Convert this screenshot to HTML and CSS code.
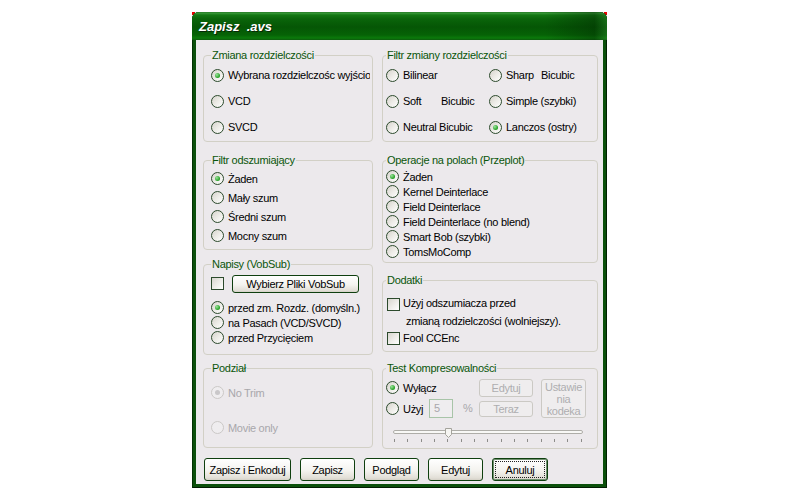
FILE: index.html
```html
<!DOCTYPE html>
<html lang="pl">
<head>
  <meta charset="UTF-8">
  <title>Zapisz .avs</title>
  <link rel="stylesheet" href="styles.css">
</head>
<body>
  <div class="frame">
    <div class="window">
      <div class="titlebar"><span class="title">Zapisz&nbsp; .avs</span></div>

      <div class="client">
        <div class="columns">
          <!-- LEFT COLUMN -->
          <div class="col">
            <fieldset class="group left h93">
              <legend>Zmiana rozdzielczości</legend>
              <div class="rows-26">
                <div class="opt"><span class="radio on"></span><span class="txt">Wybrana rozdzielczośc wyjściowa</span></div>
                <div class="opt"><span class="radio"></span><span class="txt">VCD</span></div>
                <div class="opt"><span class="radio"></span><span class="txt">SVCD</span></div>
              </div>
            </fieldset>

            <fieldset class="group left h96 mt12">
              <legend>Filtr odszumiający</legend>
              <div class="rows-19 pt2">
                <div class="opt"><span class="radio on"></span><span class="txt">Żaden</span></div>
                <div class="opt"><span class="radio"></span><span class="txt">Mały szum</span></div>
                <div class="opt"><span class="radio"></span><span class="txt">Średni szum</span></div>
                <div class="opt"><span class="radio"></span><span class="txt">Mocny szum</span></div>
              </div>
            </fieldset>

            <fieldset class="group left h97 mt8">
              <legend>Napisy (VobSub)</legend>
              <div class="vob">
                <span class="check"></span>
                <button class="btn vob-btn">Wybierz Pliki VobSub</button>
              </div>
              <div class="rows-15 pt7">
                <div class="opt"><span class="radio on"></span><span class="txt">przed zm. Rozdz. (domyśln.)</span></div>
                <div class="opt"><span class="radio"></span><span class="txt">na Pasach (VCD/SVCD)</span></div>
                <div class="opt"><span class="radio"></span><span class="txt">przed Przycięciem</span></div>
              </div>
            </fieldset>

            <fieldset class="group left h86 mt7">
              <legend>Podział</legend>
              <div class="rows-35 disabled">
                <div class="opt"><span class="radio on"></span><span class="txt">No Trim</span></div>
                <div class="opt"><span class="radio"></span><span class="txt">Movie only</span></div>
              </div>
            </fieldset>
          </div>

          <!-- RIGHT COLUMN -->
          <div class="col">
            <fieldset class="group right h93">
              <legend>Filtr zmiany rozdzielczości</legend>
              <div class="grid2">
                <div class="opt"><span class="radio"></span><span class="txt">Bilinear</span></div>
                <div class="opt"><span class="radio"></span><span class="txt"><span class="w35">Sharp</span>Bicubic</span></div>
                <div class="opt"><span class="radio"></span><span class="txt"><span class="w38">Soft</span>Bicubic</span></div>
                <div class="opt"><span class="radio"></span><span class="txt">Simple (szybki)</span></div>
                <div class="opt"><span class="radio"></span><span class="txt">Neutral Bicubic</span></div>
                <div class="opt"><span class="radio on"></span><span class="txt">Lanczos (ostry)</span></div>
              </div>
            </fieldset>

            <fieldset class="group right h109 mt12">
              <legend>Operacje na polach (Przeplot)</legend>
              <div class="rows-15 pt2">
                <div class="opt"><span class="radio on"></span><span class="txt">Żaden</span></div>
                <div class="opt"><span class="radio"></span><span class="txt">Kernel Deinterlace</span></div>
                <div class="opt"><span class="radio"></span><span class="txt">Field Deinterlace</span></div>
                <div class="opt"><span class="radio"></span><span class="txt">Field Deinterlace (no blend)</span></div>
                <div class="opt"><span class="radio"></span><span class="txt">Smart Bob (szybki)</span></div>
                <div class="opt"><span class="radio"></span><span class="txt">TomsMoComp</span></div>
              </div>
            </fieldset>

            <fieldset class="group right h78 mt11">
              <legend>Dodatki</legend>
              <div class="extra">
                <div class="chk-row">
                  <span class="check"></span>
                  <span class="txt">Użyj odszumiacza przed<span class="line2">zmianą rodzielczości (wolniejszy).</span></span>
                </div>
                <div class="chk-row short">
                  <span class="check"></span>
                  <span class="txt">Fool CCEnc</span>
                </div>
              </div>
            </fieldset>

            <fieldset class="group right h87 mt10">
              <legend>Test Kompresowalności</legend>
              <div class="tk">
                <div class="opt tk-r1"><span class="radio on"></span><span class="txt">Wyłącz</span></div>
                <div class="opt tk-r2"><span class="radio"></span><span class="txt">Użyj</span></div>
                <span class="edit">5</span>
                <span class="pct">%</span>
                <button class="btn off tk-edit">Edytuj</button>
                <button class="btn off tk-now">Teraz</button>
                <button class="btn off tk-codec">Ustawie<br>nia<br>kodeka</button>
              </div>
              <div class="slider">
                <div class="track"></div>
                <svg class="thumb" width="7" height="10" viewBox="0 0 7 10">
                  <polygon points="0.5,0.5 6.5,0.5 6.5,6.5 3.5,9.5 0.5,6.5" fill="#f6f5f2" stroke="#a4a39c"/>
                </svg>
                <div class="ticks">
                  <i></i><i></i><i></i><i></i><i></i><i></i><i></i><i></i><i></i><i></i><i></i><i></i><i></i><i></i><i></i>
                </div>
              </div>
            </fieldset>
          </div>
        </div>

        <div class="actions">
          <button class="btn w87">Zapisz i Enkoduj</button>
          <button class="btn w55">Zapisz</button>
          <button class="btn w55">Podgląd</button>
          <button class="btn w55">Edytuj</button>
          <button class="btn w56 default">Anuluj</button>
        </div>
      </div>
    </div>
  </div>
</body>
</html>
```

FILE: styles.css
```css
/* Dialog: Zapisz .avs */
body {
  margin: 0;
  padding-top: 12px;
  background: #fff;
  font-family: "Liberation Sans", Arial, sans-serif;
  font-size: 11px;
  letter-spacing: -0.3px;
  color: #000;
}

/* red pixels left in the transparent title corners */
.frame {
  width: 415px;
  margin-left: 192px;
  background:
    linear-gradient(#e80000, #e80000) left top / 3px 3px no-repeat,
    linear-gradient(#e80000, #e80000) right top / 3px 3px no-repeat;
}

.window {
  padding: 0 4px 4px;
  background: #0b500b;
  border-radius: 7px 7px 0 0;
  box-shadow: inset 1px 0 #023002, inset -1px 0 #012201, inset 0 -1px #011c01;
}

/* ---------- title bar ---------- */
.titlebar {
  height: 28px;
  margin: 0 -4px;
  padding-left: 7px;
  display: flex;
  align-items: center;
  border-radius: 7px 7px 0 0;
  background:
    linear-gradient(to right, rgba(0, 0, 0, 0) 85%, rgba(0, 30, 0, 0.35) 97%, rgba(60, 140, 60, 0.3) 100%),
    linear-gradient(to bottom, #1d6e1d 0, #3b9a3b 1px, #137813 3px, #0a640a 7px, #055605 15px, #066206 23px, #0b7a0b 26px, #0c5a0c 28px);
}

.title {
  color: #fff;
  font-size: 13px;
  font-weight: bold;
  font-style: italic;
  letter-spacing: 0;
  text-shadow: 1px 1px 0 #062806;
}

/* ---------- client area ---------- */
.client {
  height: 444px;
  box-sizing: border-box;
  padding: 9px 5px 0 7px;
  background: #ece9ec;
}

.columns {
  display: grid;
  grid-template-columns: 170px 216px;
  column-gap: 9px;
  align-items: start;
}

.col {
  display: flex;
  flex-direction: column;
}

.group {
  margin: 0;
  padding: 0 2px 0 7px;
  min-width: 0;
  box-sizing: border-box;
  border: 1px solid #d2d0c6;
  border-radius: 4px;
  overflow: hidden;
}

.group.right {
  padding-left: 3px;
}

.group legend {
  padding: 0 1px;
  line-height: 13px;
  color: #0a560a;
}

.h78 { height: 78px; }
.h86 { height: 86px; }
.h87 { height: 87px; }
.h93 { height: 93px; }
.h96 { height: 96px; }
.h97 { height: 97px; }
.h109 { height: 109px; }

.mt7 { margin-top: 7px; }
.mt8 { margin-top: 8px; }
.mt10 { margin-top: 10px; }
.mt11 { margin-top: 11px; }
.mt12 { margin-top: 12px; }
.pt2 { padding-top: 2px; }
.pt7 { padding-top: 7px; }

/* ---------- options ---------- */
.opt {
  display: flex;
  align-items: center;
  white-space: nowrap;
  overflow: hidden;
}

.opt .txt {
  margin-left: 4px;
}

.rows-15 .opt { height: 15px; }
.rows-19 .opt { height: 19px; }
.rows-26 .opt { height: 26px; }
.rows-35 .opt { height: 35px; }

.grid2 {
  display: grid;
  grid-template-columns: 103px 1fr;
  grid-auto-rows: 26px;
}

.w35 { display: inline-block; width: 35px; }
.w38 { display: inline-block; width: 38px; }

.radio {
  flex: none;
  position: relative;
  width: 13px;
  height: 13px;
  box-sizing: border-box;
  border: 1px solid #2c4a2c;
  border-radius: 50%;
  background: linear-gradient(135deg, #d6d3cc 0%, #ecebe6 50%, #fff 100%);
}

.radio.on::after {
  content: "";
  position: absolute;
  left: 3px;
  top: 3px;
  width: 5px;
  height: 5px;
  border-radius: 50%;
  background: radial-gradient(circle at 35% 35%, #9be39b, #22a022 70%, #168016);
}

.disabled .txt {
  color: #a8a7ab;
}

.disabled .radio {
  border-color: #cac8c6;
  background: #efedef;
}

.disabled .radio.on::after {
  background: #c9c7c9;
}

.check {
  flex: none;
  width: 13px;
  height: 13px;
  box-sizing: border-box;
  border: 1px solid #2c4a2c;
  background: linear-gradient(135deg, #d8d6cf 0%, #efeeea 55%, #fff 100%);
}

/* ---------- buttons ---------- */
.btn {
  height: 23px;
  padding: 0;
  box-sizing: border-box;
  font: inherit;
  letter-spacing: inherit;
  color: #000;
  border: 1px solid #0f3f0f;
  border-radius: 3px;
  background: linear-gradient(#ffffff, #f4f3ef 55%, #e2dfd7 90%, #d4d0c6);
}

.btn.off {
  color: #aeadb0;
  border-color: #cbc9c4;
  background: #efedee;
}

.btn.default {
  box-shadow: inset 0 0 0 1px #6f906f;
  outline: 1px dotted #222;
  outline-offset: -4px;
}

/* VobSub row */
.vob {
  display: flex;
  align-items: center;
  gap: 8px;
  height: 19px;
  margin-top: 3px;
}

.vob-btn {
  width: 127px;
  height: 18px;
}

/* Dodatki */
.extra {
  padding-top: 7px;
}

.chk-row {
  display: flex;
  align-items: flex-start;
  line-height: 18px;
}

.chk-row .check {
  margin: 4px 0 0 1px;
}

.chk-row .txt {
  margin-left: 3px;
}

.chk-row.short {
  height: 16px;
  line-height: 16px;
}

.chk-row.short .check {
  margin-top: 2px;
}

.line2 {
  display: block;
  padding-left: 3px;
}

/* Test Kompresowalności */
.tk {
  display: grid;
  grid-template-columns: 43px 24px 26px 54px 8px 45px;
  grid-template-rows: 19px 19px;
  row-gap: 2px;
  padding-top: 3px;
}

.tk-r1 { grid-area: 1 / 1 / 2 / 3; }
.tk-r2 { grid-area: 2 / 1; }

.edit {
  grid-area: 2 / 2;
  box-sizing: border-box;
  padding-left: 4px;
  line-height: 17px;
  color: #a8a7ab;
  border: 1px solid #a8c4a8;
  background: #efedef;
}

.pct {
  grid-area: 2 / 3;
  padding-left: 10px;
  line-height: 19px;
  color: #a8a7ab;
}

.tk-edit {
  grid-area: 1 / 4;
  height: 18px;
  margin-top: 1px;
}

.tk-now {
  grid-area: 2 / 4;
  height: 16px;
  margin-top: 2px;
}

.tk-codec {
  grid-area: 1 / 6 / 3 / 7;
  height: 39px;
  margin-top: 1px;
  line-height: 12px;
}

.slider {
  position: relative;
  width: 190px;
  margin: 12px 0 0 7px;
}

.track {
  height: 4px;
  box-sizing: border-box;
  border: 1px solid #aeada8;
  border-radius: 2px;
  background: #f8f8f6;
}

.thumb {
  position: absolute;
  left: 52px;
  top: -2px;
}

.ticks {
  display: flex;
  justify-content: space-between;
  margin-top: 5px;
  padding: 0 1px;
}

.ticks i {
  width: 1px;
  height: 3px;
  background: #8d8c8a;
}

/* bottom buttons */
.actions {
  display: flex;
  gap: 9px;
  margin-top: 9px;
  padding-left: 1px;
}

.w55 { width: 55px; }
.w56 { width: 56px; }
.w87 { width: 87px; }
```
